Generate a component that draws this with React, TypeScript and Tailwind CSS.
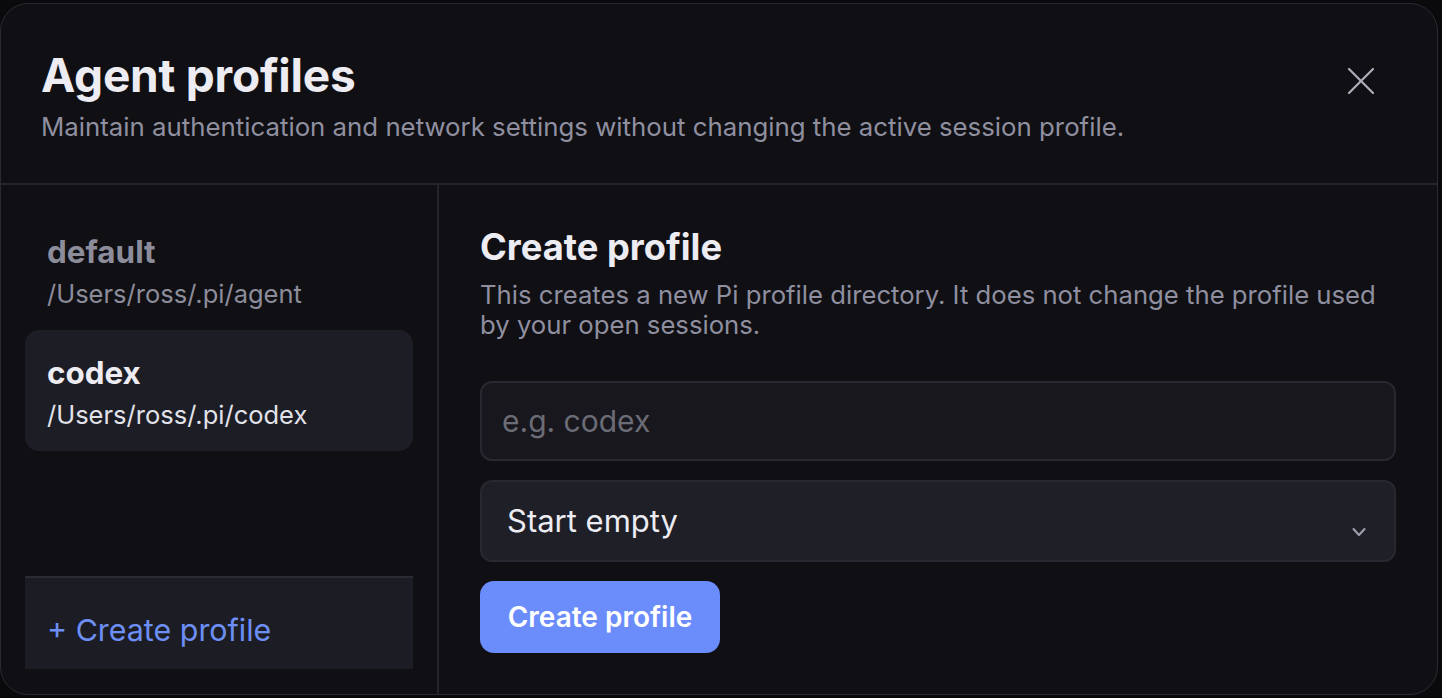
import { X } from "lucide-react";

const profiles = [
  { name: "default", path: "/Users/ross/.pi/agent", active: false },
  { name: "codex", path: "/Users/ross/.pi/codex", active: true },
];

function Chevron() {
  return (
    <svg width="14" height="10" viewBox="0 0 14 10" fill="none" className="mt-[22px] text-[#a0a0ae]">
      <path d="M1.5 2 7 8l5.5-6" stroke="currentColor" strokeWidth="2" strokeLinecap="round" strokeLinejoin="round" />
    </svg>
  );
}

export default function App() {
  return (
    <div
      className="h-[698px] w-full bg-[#0a0a0d] pt-[3px] pr-[4px] overflow-hidden"
      style={{ fontFamily: "Inter, 'Noto Sans', sans-serif" }}
    >
      <div className="flex h-[692px] flex-col rounded-[28px] border border-[#2a2a33] bg-[#0f0f14] overflow-hidden">
        {/* header */}
        <div className="flex h-[181px] shrink-0 items-start justify-between border-b-2 border-[#24242c] pl-[40px] pr-[52px] pt-[43px]">
          <div>
            <h1 className="text-[46px] font-bold leading-[56px] tracking-[-0.005em] text-[#ececf2]">Agent profiles</h1>
            <p className="mt-[8px] text-[25.8px] leading-[32px] text-[#8f8fa0]">
              Maintain authentication and network settings without changing the active session profile.
            </p>
          </div>
          <button className="mt-[10px] text-[#b0b0bc]">
            <X className="h-[48px] w-[48px]" strokeWidth={1.1} />
          </button>
        </div>

        <div className="flex min-h-0 flex-1">
          {/* sidebar */}
          <div className="flex w-[438px] shrink-0 flex-col border-r-2 border-[#24242c] px-[24px] pt-[24px] pb-[25px]">
            <div className="flex flex-col">
              {profiles.map((p) => (
                <div
                  key={p.name}
                  className={
                    p.active
                      ? "flex h-[121px] flex-col rounded-[14px] bg-[#1d1d25] px-[22px] pt-[25px]"
                      : "flex h-[121px] flex-col rounded-[14px] px-[22px] pt-[25px]"
                  }
                >
                  <div
                    className={
                      p.active
                        ? "text-[31.4px] font-bold leading-[36px] text-[#ececf2]"
                        : "text-[31.4px] font-bold leading-[36px] text-[#8c8c9a]"
                    }
                  >
                    {p.name}
                  </div>
                  <div
                    className={
                      p.active
                        ? "mt-[8px] text-[25.5px] leading-[32px] text-[#e2e2ea]"
                        : "mt-[8px] text-[25.5px] leading-[32px] text-[#8c8c9a]"
                    }
                  >
                    {p.path}
                  </div>
                </div>
              ))}
            </div>
            <div className="mt-auto h-[93px] border-t-2 border-[#2a2b33] bg-[#1c1d24] px-[22px] pt-[34px]">
              <span className="block text-[30.4px] leading-[36px] text-[#6d8ff5]">+ Create profile</span>
            </div>
          </div>

          {/* main */}
          <div className="flex flex-1 flex-col pl-[41px] pr-[41px] pt-[40px]">
            <h2 className="text-[36.3px] font-bold leading-[44px] text-[#ececf2]">Create profile</h2>
            <p className="mt-[11px] text-[25.7px] leading-[30px] text-[#8f8fa0]">
              This creates a new Pi profile directory. It does not change the profile used
              <br />
              by your open sessions.
            </p>
            <input
              placeholder="e.g. codex"
              className="mt-[41px] h-[80px] w-full rounded-[12px] border-2 border-[#282830] bg-[#17171d] px-[20px] text-[30px] text-[#ececf2] outline-none placeholder:text-[#6c6c76]"
            />
            <div className="mt-[19px] flex h-[82px] w-full items-center justify-between rounded-[12px] border-2 border-[#282830] bg-[#1e1f27] pl-[25px] pr-[28px]">
              <span className="text-[31px] text-[#ececf2]">Start empty</span>
              <Chevron />
            </div>
            <button className="mt-[19px] h-[72px] w-[240px] rounded-[14px] bg-[#6b8cfb] text-[28px] font-semibold text-white">
              Create profile
            </button>
          </div>
        </div>
      </div>
    </div>
  );
}
